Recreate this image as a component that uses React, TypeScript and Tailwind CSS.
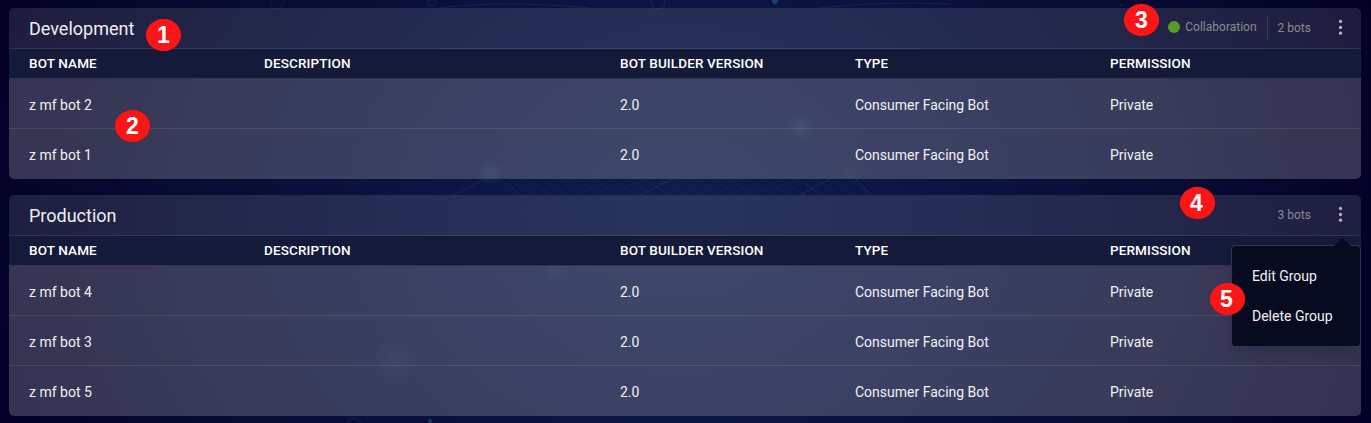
import React from "react";

type Bot = { name: string; version: string; type: string; permission: string };
type Group = { title: string; collaboration: boolean; bots: Bot[] };

const makeBot = (name: string): Bot => ({
  name,
  version: "2.0",
  type: "Consumer Facing Bot",
  permission: "Private",
});

const groups: Group[] = [
  { title: "Development", collaboration: true, bots: ["z mf bot 2", "z mf bot 1"].map(makeBot) },
  { title: "Production", collaboration: false, bots: ["z mf bot 4", "z mf bot 3", "z mf bot 5"].map(makeBot) },
];

const columns = "grid grid-cols-[235px_356px_235px_255px_1fr] items-center pl-5";

function Backdrop() {
  return (
    <svg className="pointer-events-none absolute inset-0 h-full w-full" viewBox="0 0 1371 423" aria-hidden="true">
      <defs>
        <radialGradient id="node">
          <stop offset="0" stopColor="#2f7196" stopOpacity="0.2" />
          <stop offset="1" stopColor="#2f7196" stopOpacity="0" />
        </radialGradient>
        <pattern id="hatch" width="9" height="9" patternUnits="userSpaceOnUse" patternTransform="rotate(-58)">
          <path d="M0 0V9" stroke="#4270a0" strokeOpacity="0.16" />
        </pattern>
      </defs>
      <path d="M500 180H870L885 195H485Z" fill="url(#hatch)" />
      <g fill="none" stroke="#7893c3" strokeOpacity="0.13">
        <path d="M453 195L485 179M499 179L522 195M640 195L672 179M800 195L830 179M856 179L870 195" />
        <path d="M440 8Q500 0 590 8M820 8Q880 1 950 4" />
        <circle cx="277" cy="2" r="7" />
        <circle cx="432" cy="2" r="4" />
        <circle cx="658" cy="2" r="7" />
        <circle cx="354" cy="425" r="7" />
      </g>
      <circle cx="491" cy="173" r="13" fill="url(#node)" />
      <circle cx="801" cy="127" r="14" fill="url(#node)" />
      <circle cx="555" cy="270" r="14" fill="url(#node)" opacity="0.5" />
      <circle cx="395" cy="360" r="22" fill="url(#node)" opacity="0.5" />
      <circle cx="850" cy="173" r="6" fill="#a77997" opacity="0.05" />
      <circle cx="775" cy="1" r="3" fill="#236289" opacity="0.6" />
      <circle cx="430" cy="421" r="2" fill="#236289" opacity="0.5" />
    </svg>
  );
}

function MoreIcon() {
  return (
    <svg width="5" height="16" viewBox="0 0 5 16" fill="#b5b5d2" aria-hidden="true">
      <circle cx="2.5" cy="2.4" r="1.6" />
      <circle cx="2.5" cy="8.4" r="1.6" />
      <circle cx="2.5" cy="14.2" r="1.6" />
    </svg>
  );
}

function GroupMenu() {
  return (
    <div className="absolute right-0 top-[50px] z-10 flex h-[102px] w-[130px] flex-col rounded border border-[#34354a] bg-[#060b20] pl-5 pt-[10px] text-sm text-[#f1f1f4] shadow-lg">
      <svg className="absolute right-[8px] top-[-8px]" width="19" height="9" viewBox="0 0 19 9" aria-hidden="true">
        <path d="M0 9L8 1Q9.500 0 11 1L19 9Z" fill="#060b20" />
      </svg>
      <div className="flex h-10 items-center">Edit Group</div>
      <div className="flex h-10 items-center">Delete Group</div>
    </div>
  );
}

function GroupCard({ group, menuOpen }: { group: Group; menuOpen: boolean }) {
  return (
    <section className="relative">
      <div className="overflow-hidden rounded-[5px]">
        <header className="flex h-[41px] items-center border-b border-white/10 bg-[#d8d8e0]/13 pl-5 pr-[18px]">
          <h2 className="grow text-lg leading-[41px] text-[#eeeef3]">{group.title}</h2>
          {group.collaboration && (
            <div className="mb-px mr-[10px] flex h-[22px] items-center border-r border-[#3b3c58] pr-[10px]">
              <span className="mb-px mr-[5px] h-3 w-3 rounded-full bg-[#559b25]" />
              <span className="pb-[2px] text-xs text-[#898a94]">Collaboration</span>
            </div>
          )}
          <span className="mr-[27px] text-xs text-[#898a94]">{group.bots.length} bots</span>
          <div className="mb-[3px]"><MoreIcon /></div>
        </header>
        <div className={`${columns} h-[30px] border-b border-[#303650] bg-[#141a3a] text-[13.5px] font-medium tracking-[0.12px] text-white`}>
          <span>BOT NAME</span>
          <span>DESCRIPTION</span>
          <span>BOT BUILDER VERSION</span>
          <span>TYPE</span>
          <span>PERMISSION</span>
        </div>
        {group.bots.map((bot) => (
          <div key={bot.name} className={`${columns} h-[50px] border-b border-white/10 bg-[#dcd6de]/23 pt-[3px] text-sm text-[#f1f1f4] last:border-b-0 last:pt-[2px]`}>
            <span>{bot.name}</span>
            <span />
            <span>{bot.version}</span>
            <span>{bot.type}</span>
            <span>{bot.permission}</span>
          </div>
        ))}
      </div>
      {menuOpen && <GroupMenu />}
    </section>
  );
}

const markers = [
  { label: "1", place: "left-[146px] top-[19px]" },
  { label: "2", place: "left-[115px] top-[110px]" },
  { label: "3", place: "left-[1124px] top-[4px]" },
  { label: "4", place: "left-[1180px] top-[187px] pr-[2px]" },
  { label: "5", place: "left-[1210px] top-[283px] pr-[2px]" },
];

export default function App() {
  return (
    <main className="relative h-[423px] w-[1371px] overflow-hidden bg-[#020026] bg-[radial-gradient(ellipse_740px_600px_at_680px_215px,#0e1d49_0%,#0b1541_35%,#070c32_68%,#020026_100%)] px-[9px] pt-2 font-['Roboto',sans-serif]">
      <Backdrop />
      <div className="flex w-[1352px] flex-col gap-4">
        {groups.map((group, i) => (
          <GroupCard key={group.title} group={group} menuOpen={i === 1} />
        ))}
      </div>
      {markers.map((m) => (
        <span
          key={m.label}
          className={`absolute z-20 flex h-8 w-[35px] items-center justify-center rounded-[50%] bg-[#fc1517] font-['Liberation_Sans',sans-serif] text-[23px] font-bold leading-none text-white shadow-[0_0_1px_#a01020] ${m.place}`}
        >
          {m.label}
        </span>
      ))}
    </main>
  );
}
